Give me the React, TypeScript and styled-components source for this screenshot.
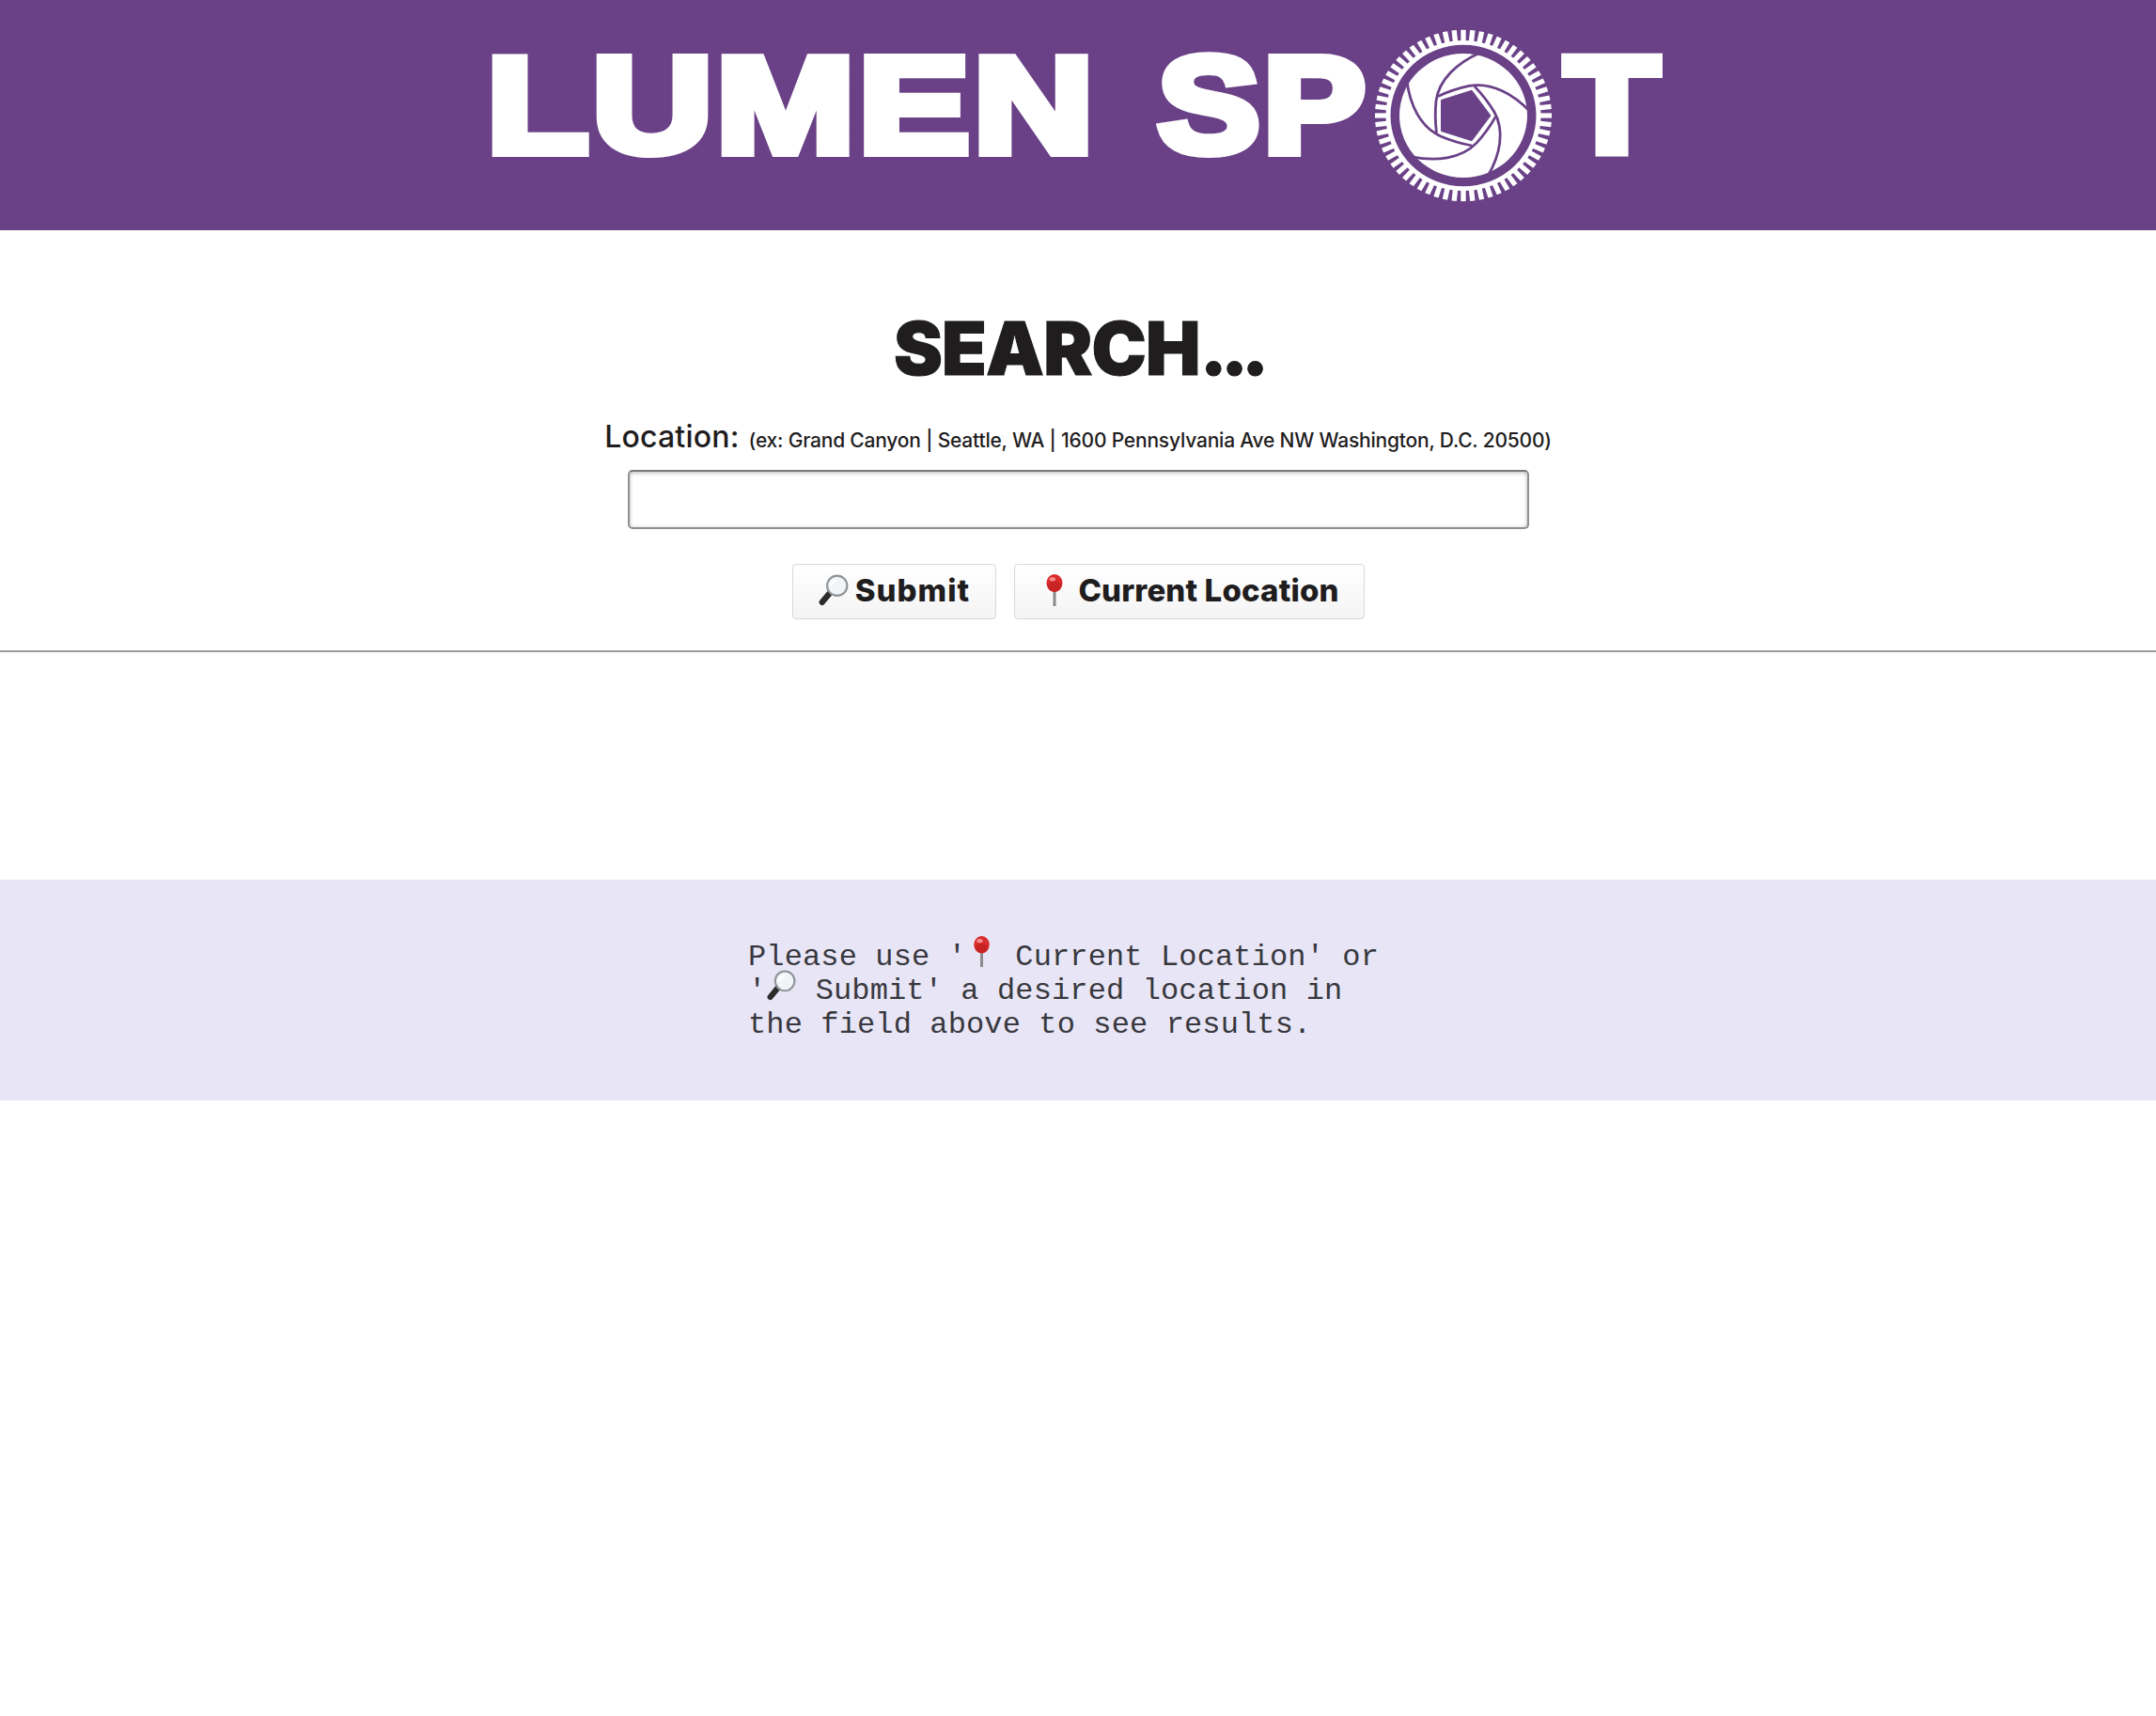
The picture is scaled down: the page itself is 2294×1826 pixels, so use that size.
import React from "react";
import styled, { createGlobalStyle } from "styled-components";

const Global = createGlobalStyle`
  html, body { margin: 0; padding: 0; background: #fff; }
  body { font-family: Inter, "Liberation Sans", sans-serif; color: #1f1d1e; }
`;

const Page = styled.div`
  width: 2294px;
  min-height: 1826px;
  display: flex;
  flex-direction: column;
`;

const Banner = styled.header`
  height: 245px;
  background: #6a4187;
  display: flex;
  justify-content: center;
  align-items: flex-start;
`;

const BannerWord = styled.span<{ $w: number; $sx: number }>`
  display: block;
  width: ${(p) => p.$w}px;
  flex: none;
  font-family: "Liberation Sans", Arial, sans-serif;
  font-weight: 700;
  font-size: 145px;
  line-height: 150px;
  margin-top: 37px;
  color: #fff;
  letter-spacing: 3.4px;
  -webkit-text-stroke: 10px #fff;
  white-space: pre;
  transform: scaleX(${(p) => p.$sx});
  transform-origin: left top;
`;

const Aperture = styled.svg`
  width: 190px;
  height: 184px;
  margin: 31px 13px 0 0;
  flex: none;
`;

const SearchArea = styled.section`
  display: flex;
  flex-direction: column;
  align-items: center;
  height: 447px;
  border-bottom: 2px solid #9a9a9a;
`;

const Title = styled.h1`
  margin: 80px 0 0;
  font-family: Inter, sans-serif;
  font-weight: 900;
  font-size: 78px;
  line-height: 92px;
  letter-spacing: -0.8px;
  color: #1f1d1e;
  -webkit-text-stroke: 1px #1f1d1e;
`;

const TitleDots = styled.span`
  letter-spacing: -7px;
`;

const LabelRow = styled.label`
  display: flex;
  align-items: baseline;
  gap: 10px;
  margin-top: 26px;
  line-height: 44px;
  white-space: nowrap;
`;

const LabelName = styled.span`
  font-size: 32px;
  font-weight: 500;
  letter-spacing: 0.2px;
`;

const LabelHint = styled.span`
  font-size: 21px;
  font-weight: 500;
  letter-spacing: -0.2px;
`;

const SearchInput = styled.input`
  display: block;
  box-sizing: border-box;
  width: 959px;
  height: 63px;
  margin: 9px 0 0 0;
  background: #fff;
  border: 2px solid #909090;
  border-top-color: #7a7a7a;
  border-radius: 5px;
  box-shadow: inset 0 1px 4px rgba(0, 0, 0, 0.3);
`;

const ButtonRow = styled.div`
  display: flex;
  gap: 19px;
  margin-top: 37px;
`;

const ActionButton = styled.button<{ $w: number; $ls: number; $gap: number }>`
  box-sizing: border-box;
  width: ${(p) => p.$w}px;
  height: 59px;
  display: flex;
  align-items: center;
  justify-content: center;
  gap: ${(p) => p.$gap}px;
  padding: 0 0 3px;
  background: linear-gradient(#ffffff, #f4f4f4);
  border: 1px solid #d9d9d9;
  border-radius: 4px;
  font-family: Inter, sans-serif;
  font-weight: 800;
  font-size: 33px;
  letter-spacing: ${(p) => p.$ls}px;
  color: #1f1d1e;
`;

const Notice = styled.section`
  margin-top: 242px;
  height: 235px;
  background: #e8e6f6;
  display: flex;
  justify-content: center;
  align-items: flex-start;
`;

const NoticeText = styled.p`
  box-sizing: border-box;
  width: 702px;
  margin: 65px 0 0;
  font-family: "Liberation Mono", "Courier New", monospace;
  font-size: 32px;
  letter-spacing: 0.13px;
  line-height: 36px;
  color: #38383e;
`;

const Glyph = styled.svg<{ $s: number; $inline?: boolean }>`
  width: ${(p) => p.$s}px;
  height: ${(p) => p.$s}px;
  flex: none;
  ${(p) => (p.$inline ? "vertical-align: baseline; margin: -10px 0 -2px;" : "")}
`;

const PURPLE = "#6a4187";

function GearArt() {
  const teeth = Array.from({ length: 60 }, (_, i) => i * 6);
  const blades = [0, 72, 144, 216, 288];
  return (
    <g transform="scale(1 0.97)">
      {teeth.map((a) => (
        <rect key={a} x="-2.7" y="-94" width="5.4" height="14" fill="#fff" transform={`rotate(${a})`} />
      ))}
      <circle r="80" fill="none" stroke="#fff" strokeWidth="5" />
      <circle r="68" fill="#fff" />
      <polygon points="29,0 9,27.6 -23.5,17 -23.5,-17 9,-27.6" fill={PURPLE} stroke={PURPLE} strokeLinejoin="round" />
      {blades.map((a) => (
        <path
          key={a}
          d="M18 -69 C-6 -58 -26 -40 -29 -16 C-30 -6 -30 7 -28.5 19"
          fill="none"
          stroke={PURPLE}
          strokeWidth="2.8"
          transform={`rotate(${a})`}
        />
      ))}
    </g>
  );
}

function Magnifier({ size, inline }: { size: number; inline?: boolean }) {
  return (
    <Glyph $s={size} $inline={inline} viewBox="0 0 32 32" aria-hidden="true">
      <path d="M12 19 L4.5 28" stroke="#2b2b2b" strokeWidth="6" strokeLinecap="round" />
      <circle cx="19.5" cy="11.5" r="10" fill="#f2f5f7" stroke="#8f9498" strokeWidth="2" />
      <path d="M13.5 12 A6.5 6.5 0 0 1 19 6" fill="none" stroke="#fff" strokeWidth="2.5" />
    </Glyph>
  );
}

function Pin({ size, inline }: { size: number; inline?: boolean }) {
  return (
    <Glyph $s={size} $inline={inline} viewBox="0 0 32 32" aria-hidden="true">
      <rect x="14.6" y="14" width="2.8" height="18" fill="#8a8a8a" />
      <ellipse cx="16" cy="9" rx="8" ry="9" fill="#d92c2c" />
      <ellipse cx="16" cy="12.5" rx="6.5" ry="5" fill="#b81d1d" opacity="0.55" />
      <ellipse cx="14" cy="5" rx="3" ry="2" fill="#f58d8d" />
    </Glyph>
  );
}

export default function App() {
  return (
    <Page>
      <Global />
      <Banner>
        <BannerWord $w={714.5} $sx={1.22}>LUMEN</BannerWord>
        <BannerWord $w={230} $sx={1.12}>SP</BannerWord>
        <Aperture viewBox="-95 -92 190 184" aria-hidden="true"><GearArt /></Aperture>
        <BannerWord $w={111.5} $sx={1.13}>T</BannerWord>
      </Banner>
      <SearchArea>
        <Title>
          SEARCH<TitleDots>...</TitleDots>
        </Title>
        <LabelRow>
          <LabelName>Location:</LabelName>
          <LabelHint>(ex: Grand Canyon | Seattle, WA | 1600 Pennsylvania Ave NW Washington, D.C. 20500)</LabelHint>
        </LabelRow>
        <SearchInput type="text" />
        <ButtonRow>
          <ActionButton $w={217} $ls={1} $gap={6}>
            <Magnifier size={34} />
            Submit
          </ActionButton>
          <ActionButton $w={373} $ls={0.15} $gap={8}>
            <Pin size={34} />
            Current Location
          </ActionButton>
        </ButtonRow>
      </SearchArea>
      <Notice>
        <NoticeText>
          Please use '<Pin size={33} inline /> Current Location' or '<Magnifier size={33} inline /> Submit' a desired location in the field above to see results.
        </NoticeText>
      </Notice>
    </Page>
  );
}
